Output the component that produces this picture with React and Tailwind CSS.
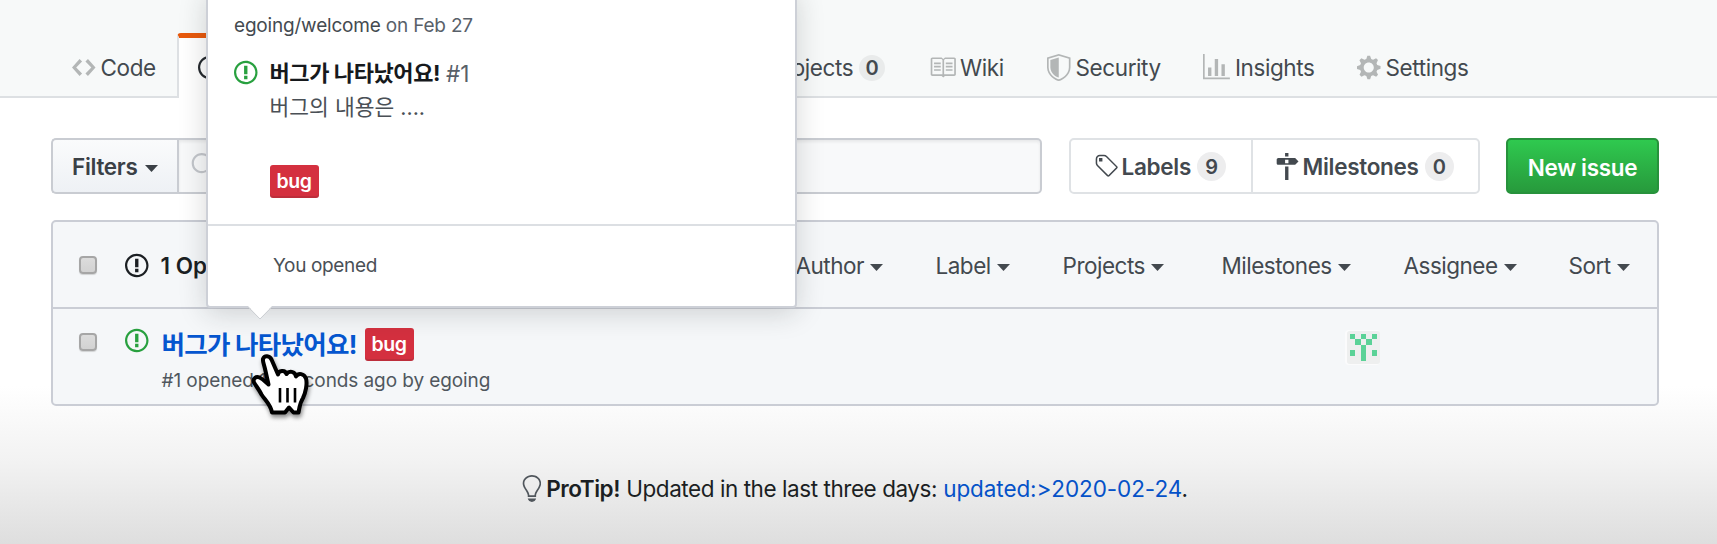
const PATHS = {
  code: [14, "M9.5 3L8 4.5 11.5 8 8 11.5 9.5 13 14 8 9.5 3zm-5 0L0 8l4.5 5L6 11.5 2.5 8 6 4.5 4.5 3z"],
  issue: [14, "M7 2.3c3.14 0 5.7 2.56 5.7 5.7s-2.56 5.7-5.7 5.7A5.71 5.71 0 011.3 8c0-3.14 2.56-5.7 5.7-5.7zM7 1C3.14 1 0 4.14 0 8s3.14 7 7 7 7-3.14 7-7-3.14-7-7-7zm1 3H6v5h2V4zm0 6H6v2h2v-2z"],
  book: [16, "M3 5h4v1H3V5zm0 3h4V7H3v1zm0 2h4V9H3v1zm11-5h-4v1h4V5zm0 2h-4v1h4V7zm0 2h-4v1h4V9zm2-6v9c0 .55-.45 1-1 1H9.5l-1 1-1-1H2c-.55 0-1-.45-1-1V3c0-.55.45-1 1-1h5.5l1 1 1-1H15c.55 0 1 .45 1 1zm-8 .5L7.5 3H2v9h6V3.5zm7-.5H9.5l-.5.5V12h6V3z"],
  shield: [14, "M0 2l7-2 7 2v6.02C14 12.69 8.69 16 7 16c-1.69 0-7-3.31-7-7.98V2zm1 .75L7 1l6 1.75v5.268C13 12.104 8.449 15 7 15c-1.449 0-6-2.896-6-6.982V2.75zm1 .75L7 2v12c-1.207 0-5-2.482-5-5.985V3.5z"],
  graph: [16, "M16 14v1H0V0h1v14h15zM5 13H3V8h2v5zm4 0H7V3h2v10zm4 0h-2V6h2v7z"],
  gear: [14, "M14 8.77v-1.6l-1.94-.64-.45-1.09.88-1.84-1.13-1.13-1.81.91-1.09-.45-.69-1.92h-1.6l-.63 1.94-1.11.45-1.84-.88-1.13 1.13.91 1.81-.45 1.09L0 7.23v1.59l1.94.64.45 1.09-.88 1.84 1.13 1.13 1.81-.91 1.09.45.69 1.92h1.59l.63-1.94 1.11-.45 1.84.88 1.13-1.13-.92-1.81.47-1.09L14 8.75v.02zM7 11c-1.66 0-3-1.34-3-3s1.34-3 3-3 3 1.34 3 3-1.34 3-3 3z"],
  tag: [14, "M7.73 1.73C7.26 1.26 6.62 1 5.96 1H3.5C2.13 1 1 2.13 1 3.5v2.47c0 .66.27 1.3.73 1.77l6.06 6.06c.39.39 1.02.39 1.41 0l4.59-4.59a.996.996 0 000-1.41L7.73 1.73zM2.38 7.09c-.31-.3-.47-.7-.47-1.13V3.5c0-.88.72-1.59 1.59-1.59h2.47c.42 0 .83.16 1.13.47l6.14 6.13-4.73 4.73-6.13-6.15zM3.01 3h2v2H3V3h.01z"],
  milestone: [14, "M8 2H6V0h2v2zm4 5H2c-.55 0-1-.45-1-1V4c0-.55.45-1 1-1h10l2 2-2 2zM8 4H6v2h2V4zM6 16h2V8H6v8z"],
  bulb: [12, "M6.5 0C3.48 0 1 2.19 1 5c0 .92.55 2.25 1 3 1.34 2.25 1.78 2.78 2 4v1h5v-1c.22-1.22.66-1.75 2-4 .45-.75 1-2.08 1-3 0-2.81-2.48-5-5.5-5zm3.64 7.48c-.25.44-.47.8-.67 1.11-.86 1.41-1.25 2.06-1.45 3.23-.02.05-.02.11-.02.17H5c0-.06 0-.13-.02-.17-.2-1.17-.59-1.83-1.45-3.23-.2-.31-.42-.67-.67-1.11C2.44 6.78 2 5.65 2 5c0-2.2 2.02-4 4.5-4 1.22 0 2.36.42 3.22 1.19C10.55 2.94 11 3.94 11 5c0 .66-.44 1.78-.86 2.48zM4 14h5c-.23 1.14-1.3 2-2.5 2s-2.27-.86-2.5-2z"],
  search: [16, "M15.7 13.3l-3.81-3.83A5.93 5.93 0 0013 6c0-3.31-2.69-6-6-6S1 2.69 1 6s2.69 6 6 6c1.3 0 2.48-.41 3.47-1.11l3.83 3.81c.19.2.45.3.7.3.25 0 .52-.09.7-.3a.996.996 0 000-1.41v.01zM7 10.7c-2.59 0-4.7-2.11-4.7-4.7 0-2.59 2.11-4.7 4.7-4.7 2.59 0 4.7 2.11 4.7 4.7 0 2.59-2.11 4.7-4.7 4.7z"],
};

function Icon({ name, className = "" }) {
  const [w, d] = PATHS[name];
  return (
    <svg viewBox={`0 0 ${w} 16`} width={w * 1.68} height={27} className={`shrink-0 ${className}`} fill="currentColor" fillRule="evenodd">
      <path d={d} />
    </svg>
  );
}

function Caret({ className = "ml-[6px]" }) {
  return (
    <svg viewBox="0 0 13 7" className={`h-[7px] w-[13px] shrink-0 ${className}`} fill="currentColor">
      <path d="M0 0h13L6.500 7z" />
    </svg>
  );
}

function NavItem({ icon, label, className, gap = "ml-[5px]", count }) {
  return (
    <div className={`flex h-full shrink-0 items-center ${className}`}>
      {icon && <Icon name={icon} className="text-[#b3b6b6]" />}
      <span className={`${gap} text-[22.500px] tracking-[-0.400px]`}>{label}</span>
      {count !== undefined && (
        <span className="ml-[6px] flex h-[26px] w-[26px] items-center justify-center rounded-full bg-[#e9ebeb] pt-px text-[20px] font-semibold">{count}</span>
      )}
    </div>
  );
}

function Bug() {
  return (
    <span className="flex h-[33px] w-[49px] shrink-0 items-center justify-center rounded-[3px] bg-[#d4303f] text-[19.500px] leading-none font-semibold tracking-[-0.400px] text-white shadow-[inset_0_-2px_0_rgba(27,31,35,0.120)]">
      bug
    </span>
  );
}

function Checkbox() {
  return <span className="block h-[18px] w-[18px] shrink-0 rounded-[4px] border-2 border-[#a6a6a6] bg-linear-to-b from-[#dcdcdc] to-[#d2d2d2] shadow-[0_1px_1px_rgba(0,0,0,0.150)]" />;
}

function Count({ children }) {
  return <span className="ml-[6px] flex h-[29px] w-[29px] shrink-0 items-center justify-center rounded-full bg-[#ededee] text-[20px]">{children}</span>;
}

const FILTERS = [
  ["Author", "w-[140px]"],
  ["Label", "w-[127px]"],
  ["Projects", "w-[159px]"],
  ["Milestones", "w-[182px]"],
  ["Assignee", "w-[165px]"],
  ["Sort", "w-[62px]"],
];

const AVATAR = ["10101", "01010", "00100", "10101", "00100"];

function Avatar() {
  return (
    <svg viewBox="0 0 33 33" className="h-[33px] w-[33px] shrink-0 rounded-[3px] shadow-[-1px_0_0_1px_#fbfbfc]" shapeRendering="crispEdges">
      <rect width="33" height="33" fill="#eeefef" />
      {AVATAR.flatMap((row, y) =>
        [...row].map((c, x) => c === "1" && <rect key={`${x}-${y}`} x={2.75 + x * 5.5} y={2.75 + y * 5.5} width="5.5" height="5.5" fill="#5bd297" />)
      )}
    </svg>
  );
}

function HandCursor() {
  return (
    <svg viewBox="0 0 60 70" className="absolute top-[352px] left-[251px] h-[70px] w-[60px] drop-shadow-[1px_3px_2px_rgba(0,0,0,0.450)]">
      <path
        d="M21 60.500 C20 53 14 48 10.500 42.500 C8 37.500 5 34 3 30.500 C1.500 26.500 5 24 8.500 25.500 C12 27 14.500 30 17.500 32.500 L14.500 19 C13 12 11.500 9.500 12 7 C13.500 3 18.500 3.500 20.500 7.500 L27 22.500 C27.500 18.500 34 17.500 35.500 22 C38 18.500 44 19 45 24.500 C47.500 20.500 53 21.500 55 26.500 C56.500 32 54.500 41 52 46 C48.500 51.500 48.500 56 47.500 60.500 L42.500 60.500 L38 55.500 L34 60.500 Z"
        fill="#fff"
        stroke="#000"
        strokeWidth="4"
        strokeLinejoin="round"
      />
      <path d="M29 36v14.500M36.500 36v14.500M44 36v14.500" stroke="#000" strokeWidth="2.600" />
    </svg>
  );
}

function Popover() {
  return (
    <div className="absolute -top-[10px] left-[206px] h-[318px] w-[591px] rounded-[4px] border-2 border-[#cdd0d7] bg-white text-[#4a5056] shadow-[0_5px_28px_rgba(27,31,35,0.180)]">
      <div className="flex h-[234px] flex-col border-b-2 border-[#dcdfe3] pt-[18px] pl-[26px]">
        <div className="h-[30px] text-[19px] leading-[31px] tracking-[-0.190px]">
          <span className="text-[#444a50]">egoing/welcome</span> <span className="text-[#586069]">on Feb 27</span>
        </div>
        <div className="mt-[17px] flex">
          <Icon name="issue" className="mt-[2px] text-[#28a03f]" />
          <div className="ml-[12px]">
            <div className="flex h-[33px] items-center text-[22px] leading-[33px] whitespace-pre">
              <span className="font-bold tracking-[-0.400px] text-[#16191c]">버그가 나타났어요!</span>
              <span className="ml-[6px] text-[22.500px] text-[#586069]">#1</span>
            </div>
            <div className="h-[33px] text-[21.500px] leading-[34px]">버그의 내용은 ....</div>
            <div className="mt-[42px]">
              <Bug />
            </div>
          </div>
        </div>
      </div>
      <div className="pt-[26px] pl-[65px] text-[19px] leading-[28px] tracking-[-0.350px]">You opened</div>
      <svg viewBox="0 0 26 14" className="absolute top-[314px] left-[39px] h-[14px] w-[26px]">
        <path d="M1 0L13 12.500L25 0z" fill="#fff" />
        <path d="M1 1L13 13L25 1" fill="none" stroke="#cdd0d4" strokeWidth="1" />
      </svg>
    </div>
  );
}

export default function App() {
  return (
    <div className="relative h-[544px] w-[1717px] overflow-hidden bg-white bg-linear-to-b from-white from-[71%] via-[#f2f2f2] via-[85%] to-[#dedede] font-['Inter','Noto_Sans_CJK_KR',sans-serif] text-[#43494f]">
      <nav className="flex h-[98px] w-full border-b-2 border-[#dde0e3] bg-[#f7f9f9]">
        <NavItem icon="code" label="Code" className="w-[177px] pt-[39px] pl-[72px]" />
        <div className="mt-[33px] flex h-[65px] w-[180px] shrink-0 rounded-t-[4px] border-x-2 border-t-[5px] border-x-[#dde0e3] border-t-[#e8590c] bg-white pt-[16px] pl-[19px] text-[#24292e]">
          <Icon name="issue" />
        </div>
        <div className="w-[388px] shrink-0" />
        <NavItem label="Projects" className="w-[184px] pt-[39px] pl-[20px]" count={0} />
        <NavItem icon="book" label="Wiki" className="w-[118px] pt-[39px]" gap="ml-[4px]" />
        <NavItem icon="shield" label="Security" className="w-[156px] pt-[39px]" />
        <NavItem icon="graph" label="Insights" className="w-[154px] pt-[39px]" />
        <NavItem icon="gear" label="Settings" className="pt-[39px]" />
      </nav>

      <div className="flex pt-[40px] pl-[51px] text-[22.500px] font-semibold tracking-[-0.300px]">
        <div className="flex h-[56px] w-[126px] items-center rounded-l-[5px] border-2 border-r-0 border-[#c9ccd2] bg-linear-to-b from-[#fafbfc] to-[#eef1f5] pt-px pl-[19px] text-[#3a4046]">
          Filters
          <Caret className="mt-[3px] ml-[7px]" />
        </div>
        <div className="flex h-[56px] w-[865px] items-center rounded-r-[5px] border-2 border-[#c9ccd2] bg-[#f8f9fa] pl-[11px] shadow-[inset_0_2px_3px_rgba(27,31,35,0.070)]">
          <Icon name="search" className="text-[#c3c6cb]" />
        </div>
        <div className="ml-[27px] flex h-[56px] w-[411px] rounded-[5px] border-2 border-[#dfe2e5] bg-white">
          <div className="flex w-[182px] items-center border-r-2 border-[#dfe2e5] pt-px pl-[23px]">
            <Icon name="tag" />
            <span className="ml-[4px]">Labels</span>
            <Count>9</Count>
          </div>
          <div className="flex items-center pt-px pl-[22px]">
            <Icon name="milestone" />
            <span className="ml-[4px]">Milestones</span>
            <Count>0</Count>
          </div>
        </div>
        <div className="ml-[26px] flex h-[56px] w-[153px] items-center justify-center rounded-[5px] border-2 border-[#27923c] bg-linear-to-b from-[#2fc94f] to-[#279a3c] pt-[3px] text-white">
          New issue
        </div>
      </div>

      <div className="mt-[26px] ml-[51px] h-[186px] w-[1608px] rounded-[5px] border-2 border-[#cacdd5] bg-[#f5f7f9]">
        <div className="flex h-[87px] items-center border-b-2 border-[#cacdd5] pt-px pl-[26px]">
          <Checkbox />
          <Icon name="issue" className="ml-[28px] text-[#1b1f23]" />
          <span className="ml-[12px] w-[635px] pt-px text-[22.500px] font-semibold text-[#1b1f23]">1 Open</span>
          {FILTERS.map(([label, width]) => (
            <div key={label} className={`flex shrink-0 items-center pt-px text-[22.500px] tracking-[-0.500px] ${width}`}>
              {label}
              <Caret className="mt-[3px] ml-[6px]" />
            </div>
          ))}
        </div>
        <div className="flex pl-[26px]">
          <div className="pt-[24px]">
            <Checkbox />
          </div>
          <Icon name="issue" className="mt-[18px] ml-[28px] text-[#28a03f]" />
          <div className="ml-[13px] w-[1185px] pt-[19px]">
            <div className="flex h-[33px] items-center">
              <span className="pb-px text-[25.500px] leading-[33px] font-bold tracking-[-0.730px] whitespace-pre text-[#0556cf]">버그가 나타났어요!</span>
              <span className="ml-[8px]">
                <Bug />
              </span>
            </div>
            <div className="mt-[5px] text-[19px] leading-[30px] tracking-[-0.090px] text-[#50575e]">#1 opened 17 seconds ago by egoing</div>
          </div>
          <div className="pt-[22px]">
            <Avatar />
          </div>
        </div>
      </div>

      <div className="mt-[67px] flex items-center pl-[521px] text-[22.500px] leading-[30px] tracking-[-0.440px] text-[#1b1f23]">
        <Icon name="bulb" className="text-[#50565c]" />
        <span className="ml-[5px] w-[80px] pt-px font-semibold">ProTip!</span>
        <span className="w-[317px] pt-px">Updated in the last three days:</span>
        <span className="pt-px tracking-[-0.080px]">
          <span className="text-[#0552c8]">updated:&gt;2020-02-24</span>.
        </span>
      </div>

      <Popover />
      <HandCursor />
    </div>
  );
}
